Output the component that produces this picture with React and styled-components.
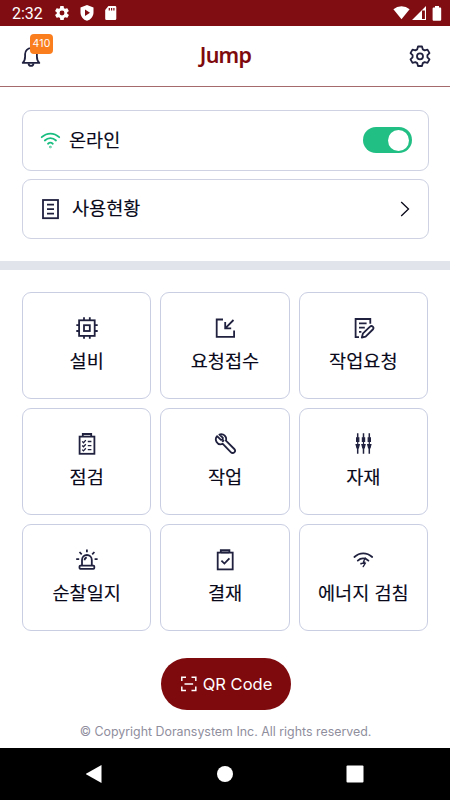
import { useState } from 'react'
import styled, { createGlobalStyle } from 'styled-components'

const GlobalStyle = createGlobalStyle`
  * {
    box-sizing: border-box;
  }
  body {
    margin: 0;
    background: #fff;
    font-family: Inter, 'Noto Sans CJK KR', sans-serif;
    color: #08081a;
  }
  button {
    font: inherit;
    color: inherit;
    padding: 0;
    border: none;
    background: none;
    cursor: pointer;
  }
`

const Screen = styled.div`
  width: 450px;
  height: 800px;
  display: flex;
  flex-direction: column;
  overflow: hidden;
`

const StatusBar = styled.div`
  height: 26px;
  flex-shrink: 0;
  background: #7f0d12;
  color: #fff;
  display: flex;
  align-items: center;
  justify-content: space-between;
  padding: 0 8px 0 12px;
`

const StatusGroup = styled.div`
  display: flex;
  align-items: center;
  gap: ${props => props.$gap};
`

const Clock = styled.span`
  font-family: Roboto, sans-serif;
  font-size: 16px;
  line-height: 26px;
  width: 30px;
  margin-right: 2px;
  padding-top: 2px;
`

const Header = styled.header`
  height: 61px;
  flex-shrink: 0;
  display: flex;
  align-items: center;
  justify-content: space-between;
  padding: 0 18px;
  border-bottom: 1px solid #a56a6c;
`

const BellButton = styled.button`
  position: relative;
  width: 24px;
  height: 24px;
`

const Badge = styled.span`
  position: absolute;
  left: 12px;
  top: -10px;
  width: 23px;
  height: 20px;
  border-radius: 4px;
  background: #fa7e1e;
  color: #fff;
  font-size: 10.5px;
  letter-spacing: 0.2px;
  line-height: 19px;
  text-align: center;
`

const Logo = styled.h1`
  margin: -3px 0 0 1px;
  font-family: 'Noto Sans', sans-serif;
  font-size: 21.5px;
  font-weight: 600;
  line-height: 30px;
  letter-spacing: -0.8px;
  color: #7f0a0e;
`

const IconButton = styled.button`
  width: 24px;
  height: 24px;
`

const RowList = styled.section`
  display: flex;
  flex-direction: column;
  gap: 8px;
  padding: 23px 21px 22px 22px;
`

const Row = styled.div`
  height: 60.5px;
  border: 1px solid #ced2e2;
  border-radius: 9px;
  display: flex;
  align-items: center;
  padding: 0 16px;
`

const RowLabel = styled.span`
  flex: 1;
  margin-left: ${props => props.$gap};
  margin-top: -1px;
  font-size: 18.6px;
  font-weight: 400;
  -webkit-text-stroke: 0.15px;
  line-height: 28px;
`

const Switch = styled.button`
  width: 49px;
  height: 26px;
  border-radius: 13px;
  background: ${props => (props.$on ? '#22bf84' : '#c5c9d6')};
  display: flex;
  align-items: center;
  justify-content: ${props => (props.$on ? 'flex-end' : 'flex-start')};
  padding: 0 3px;
`

const Knob = styled.span`
  width: 21px;
  height: 21px;
  border-radius: 50%;
  background: #fff;
`

const Divider = styled.div`
  height: 9px;
  flex-shrink: 0;
  background: #e2e4ec;
`

const MenuGrid = styled.section`
  display: grid;
  grid-template-columns: repeat(3, 1fr);
  grid-auto-rows: 107px;
  gap: 9px;
  padding: 22px 22px 0;
`

const MenuCard = styled.button`
  border: 1px solid #c9cee2;
  border-radius: 9px;
  display: flex;
  flex-direction: column;
  align-items: center;
  padding-top: 22.5px;
`

const MenuLabel = styled.span`
  margin-top: 7px;
  font-size: 18.6px;
  font-weight: 400;
  -webkit-text-stroke: 0.15px;
  line-height: 28px;
  white-space: nowrap;
`

const Footer = styled.footer`
  flex: 1;
  display: flex;
  flex-direction: column;
  align-items: center;
  padding-top: 27px;
`

const QrButton = styled.button`
  width: 130px;
  height: 52px;
  border-radius: 26px;
  background: #7f0a0e;
  color: #fff;
  font-size: 16.5px;
  display: flex;
  align-items: center;
  justify-content: center;
  gap: 5px;
  margin-left: 1px;
  padding: 0 0 1px 1px;
`

const Copyright = styled.p`
  margin: 12px 0 0 1px;
  font-size: 12.4px;
  line-height: 19px;
  color: #8f8e9d;
`

const NavBar = styled.nav`
  height: 52px;
  flex-shrink: 0;
  background: #000;
  display: flex;
  align-items: center;
  justify-content: space-between;
  padding: 0 86px;
`

const Icon = styled.svg`
  display: block;
  flex-shrink: 0;
  fill: none;
  stroke: ${props => props.$color || '#20213f'};
  stroke-width: ${props => props.$weight || 1.8};
`

const SolidIcon = styled.svg`
  display: block;
  flex-shrink: 0;
  fill: #fff;
`

const BatteryIcon = styled(SolidIcon)`
  margin-left: 4px;
`

const menus = [
  {
    label: '설비',
    icon: (
      <>
        <rect x="4.1" y="4.3" width="15.6" height="15.6" />
        <rect x="9" y="9.2" width="5.8" height="5.8" />
        <path d="M9 4V1.3M14.8 4V1.3M9 20v2.7M14.8 20v2.7M4 9.2H1.3M4 15H1.3M20 9.2h2.7M20 15h2.7" />
      </>
    ),
  },
  {
    label: '요청접수',
    icon: <path d="M10 3.5H3.7v17.3h17.4V14.5M20.5 4l-8.3 8.3M12.2 6v6.3h6" />,
  },
  {
    label: '작업요청',
    icon: (
      <>
        <path d="M8 21.2H4.6V3h14.7v4.8M8 7.4h7.6M8 11.6h5.8M8 15.8h2.4" />
        <path d="M12 17.3l7-6.6a1.9 1.9 0 0 1 2.8 2.8l-7.2 7.2-3.8.8z" strokeLinejoin="round" />
      </>
    ),
  },
  {
    label: '점검',
    icon: (
      <>
        <path d="M7.8 4.4V2h8.4v2.4" />
        <rect x="4.6" y="4.6" width="14.8" height="17.2" />
        <path d="M7.2 9.4l1.3 1.3 2.3-2.6M7.2 13.5l1.3 1.3 2.3-2.6M7.2 17.6l1.3 1.3 2.3-2.6M12.8 9.5h3.6M12.8 13.6h3.6M12.8 17.7h3.6" strokeWidth="1.3" />
      </>
    ),
  },
  {
    label: '작업',
    icon: (
      <>
        <path
          d="M4.1 4.2l3.8 3.7 1.6-.3.4-1.8L6.4 2.5c2.5-.9 5.4.2 6.4 2.7.5 1.2.5 2.4.1 3.5l8.4 8.3a2.3 2.3 0 0 1-3.3 3.3l-8.2-8.5c-2.2 1-4.9.3-6.2-1.8-1.1-1.8-1-4.1.5-5.8z"
          strokeLinejoin="round"
        />
        <path d="M9.2 9.8l1.8-1.8" />
      </>
    ),
  },
  {
    label: '자재',
    icon: (
      <>
        <path d="M6.7 1.3v4.5M12.5 1.3v4.5M18.3 1.3v4.5M6.7 15v6.8M12.5 15v6.8M18.3 15v6.8" strokeWidth="1.5" />
        <path d="M6.7 9v4M12.5 9v4M18.3 9v4" strokeWidth="1.2" />
        <path
          d="M5.6 5.8h2.2v3.7H5.6zM11.4 5.8h2.2v3.7h-2.2zM17.2 5.8h2.2v3.7h-2.2zM5.1 12.7h3.2l-.9 3.3H6zM10.9 12.7h3.2l-.9 3.3h-1.4zM16.7 12.7h3.2l-.9 3.3h-1.4z"
          fill="#20213f"
          strokeWidth="1.2"
        />
      </>
    ),
  },
  {
    label: '순찰일지',
    icon: (
      <>
        <path d="M7 17.3v-5.4a4.9 4.9 0 0 1 9.8 0v5.4M9.6 12.2c0-1.5.9-2.4 2.2-2.5" />
        <rect x="4.5" y="17.6" width="14.8" height="3.3" rx="0.8" />
        <path d="M11.9 1.4v2.8M4.5 4l2.2 2.3M19.4 4l-2.2 2.3M1.2 11.2h3M19.6 11.2h3" />
      </>
    ),
  },
  {
    label: '결재',
    icon: (
      <>
        <path d="M7.8 4.4V2.2h8.6v2.2M8 4.4h8.2" />
        <rect x="4.7" y="4.6" width="15" height="16.8" />
        <path d="M8.4 12.7l3 2.9 5-5.2" />
      </>
    ),
  },
  {
    label: '에너지 검침',
    icon: (
      <g strokeLinecap="round">
        <path d="M3.4 9c5.2-4.9 12.5-4.9 17.8 0M6.8 12.6c3.1-2.8 7.4-2.9 10.6 0" />
        <path d="M14.2 9.8l-2 4.7M9.8 15.3h4.4l-2 3.3M10 16l3.9-1.9" strokeWidth="1.3" />
      </g>
    ),
  },
]

function App() {
  const [online, setOnline] = useState(true)

  return (
    <Screen>
      <GlobalStyle />
      <StatusBar>
        <StatusGroup $gap="11px">
          <Clock>2:32</Clock>
          <SolidIcon width="14" height="14" viewBox="2 2 20 20">
            <path
              fillRule="evenodd"
              d="M19.4 13a7.8 7.8 0 0 0 0-2l2.1-1.6c.2-.2.2-.4.1-.6l-2-3.5c-.1-.2-.4-.3-.6-.2l-2.5 1a7 7 0 0 0-1.7-1L14.4 2.4a.5.5 0 0 0-.5-.4h-4a.5.5 0 0 0-.5.4L9.1 5.1a7 7 0 0 0-1.7 1l-2.5-1c-.2-.1-.5 0-.6.2l-2 3.5c-.1.2-.1.5.1.6L4.5 11a7.8 7.8 0 0 0 0 2l-2.1 1.6c-.2.2-.2.4-.1.6l2 3.5c.1.2.4.3.6.2l2.5-1a7 7 0 0 0 1.7 1l.4 2.7c0 .2.2.4.5.4h4c.2 0 .5-.2.5-.4l.4-2.7a7 7 0 0 0 1.7-1l2.5 1c.2.1.5 0 .6-.2l2-3.5c.1-.2.1-.5-.1-.6zM12 15.5a3.5 3.5 0 1 1 0-7 3.5 3.5 0 0 1 0 7z"
            />
          </SolidIcon>
          <SolidIcon width="14" height="16" viewBox="0 0 14 16">
            <path fillRule="evenodd" d="M7 0l6.5 2.5v5c0 4-2.8 7.3-6.5 8.3C3.3 14.8.5 11.5.5 7.5v-5zM5 4.5v6.5l5-3.2z" />
          </SolidIcon>
          <SolidIcon width="14" height="16" viewBox="2 0 14 16">
            <path fillRule="evenodd" d="M5.4 1H12a1.3 1.3 0 0 1 1.3 1.3v11.4A1.3 1.3 0 0 1 12 15H3.5a1.3 1.3 0 0 1-1.3-1.3V5zM5.7 3v2.5h1.2V3zM8 3v2.5h1.2V3zM10.3 3v2.5h1.2V3z" />
          </SolidIcon>
        </StatusGroup>
        <StatusGroup $gap="2px">
          <SolidIcon width="17" height="14" viewBox="0 0 17 14">
            <path d="M8.5 13.3L.4 3.2a13 13 0 0 1 16.2 0z" />
          </SolidIcon>
          <SolidIcon width="14" height="14" viewBox="0 0 14 14">
            <path fillRule="evenodd" d="M14 0v14H0zM12.9 4.4H10v8.5h2.9z" />
          </SolidIcon>
          <BatteryIcon width="10" height="15" viewBox="0 0 10 15">
            <path d="M3 0h4v1.5h1.3c.5 0 .9.4.9.9v11.4c0 .5-.4.9-.9.9H1.5a.9.9 0 0 1-.9-.9V2.4c0-.5.4-.9.9-.9H3z" />
          </BatteryIcon>
        </StatusGroup>
      </StatusBar>

      <Header>
        <BellButton aria-label="알림">
          <Icon width="24" height="24" viewBox="0 0 24 24">
            <path d="M4.7 18.9h16.6c-2-1.8-2.4-3.7-2.4-6.4V10a5.9 5.9 0 0 0-11.8 0v2.5c0 2.7-.4 4.6-2.4 6.4zM13 4V2.3" strokeLinejoin="round" />
            <path d="M10.5 19.3c.3 3.5 4.7 3.5 5 0" />
          </Icon>
          <Badge>410</Badge>
        </BellButton>
        <Logo>Jump</Logo>
        <IconButton aria-label="설정">
          <Icon width="24" height="24" viewBox="0 0 24 24">
            <circle cx="12" cy="12.3" r="3" />
            <path
              strokeLinejoin="round"
              d="M10 2.5h4l.8 2.9 1.8 1 2.9-.8 2 3.5-2.1 2.100v2.100l2.100 2.100-2 3.500-2.900-.8-1.800 1-.8 2.900h-4l-.8-2.900-1.800-1-2.900.8-2-3.500 2.100-2.100v-2.100L2.500 9.100l2-3.500 2.900.8 1.800-1z"
            />
          </Icon>
        </IconButton>
      </Header>

      <RowList>
        <Row>
          <Icon width="24" height="24" viewBox="0 0 24 24" $color="#19bd80">
            <path strokeLinecap="round" d="M2.7 9.2c5.2-4.9 12.3-4.9 17.5 0M5.8 12.5c3.3-3.1 7.9-3.1 11.2 0M9 15.7c1.5-1.3 3.3-1.3 4.8 0" />
            <circle cx="11.4" cy="19" r="0.3" />
          </Icon>
          <RowLabel $gap="6px">온라인</RowLabel>
          <Switch $on={online} role="switch" aria-checked={online} onClick={() => setOnline(!online)}>
            <Knob />
          </Switch>
        </Row>
        <Row>
          <Icon width="24" height="24" viewBox="0 0 24 24">
            <rect x="4" y="3" width="15" height="18.2" />
            <path d="M8 7.7h7M8 12.2h7M8 16.7h7" />
          </Icon>
          <RowLabel $gap="9px">사용현황</RowLabel>
          <Icon width="12" height="18" viewBox="0 0 12 18" $color="#08081a" $weight="1.3">
            <path d="M1.2 2l7.3 7-7.3 7" />
          </Icon>
        </Row>
      </RowList>

      <Divider />

      <MenuGrid>
        {menus.map(menu => (
          <MenuCard key={menu.label}>
            <Icon width="24" height="24" viewBox="0 0 24 24">{menu.icon}</Icon>
            <MenuLabel>{menu.label}</MenuLabel>
          </MenuCard>
        ))}
      </MenuGrid>

      <Footer>
        <QrButton>
          <Icon width="18" height="18" viewBox="0 0 18 18" $color="#fff" $weight="1.5">
            <path d="M1.8 6V2.2H6M11.5 2.2h4.3V6M1.8 11.5v4H6M11.5 15.5h4.3v-4M4.5 9h8.6" />
          </Icon>
          QR Code
        </QrButton>
        <Copyright>© Copyright Doransystem Inc. All rights reserved.</Copyright>
      </Footer>

      <NavBar>
        <SolidIcon width="18" height="18" viewBox="2 0 18 18">
          <path d="M17.5 0v18L1.5 9z" />
        </SolidIcon>
        <SolidIcon width="18" height="18" viewBox="0 0 18 18">
          <circle cx="9" cy="9" r="8" />
        </SolidIcon>
        <SolidIcon width="18" height="18" viewBox="0 0 18 18">
          <rect x="0.5" y="0.5" width="17" height="17" rx="1" />
        </SolidIcon>
      </NavBar>
    </Screen>
  )
}

export default App
